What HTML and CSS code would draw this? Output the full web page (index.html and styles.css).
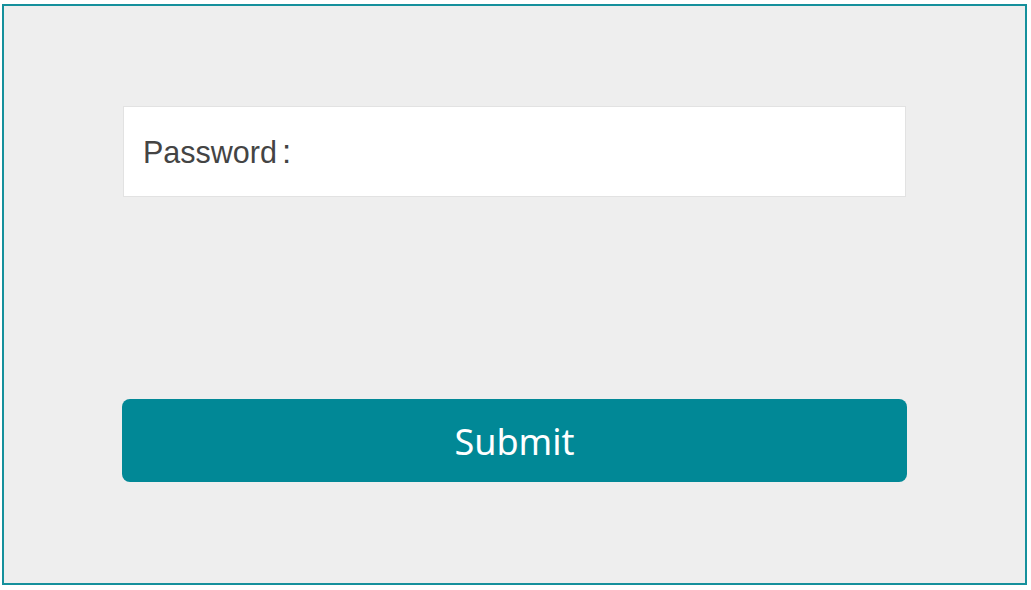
FILE: index.html
```html
<!DOCTYPE html>
<html>
<head>
<meta charset="utf-8">
<link rel="stylesheet" href="styles.css">
</head>
<body>
<div class="frame">
  <div class="field"><span class="label">Password<span class="colon">:</span></span></div>
  <button class="submit">Submit</button>
</div>
</body>
</html>
```
FILE: styles.css
```css
html, body { margin: 0; padding: 0; background: #ffffff; }
.frame {
  box-sizing: border-box;
  margin: 4px 0 0 2px;
  width: 1025px;
  height: 581px;
  border: 2px solid #15909c;
  background: #eeeeee;
  padding: 100px 0 0 118px;
  display: flex;
  flex-direction: column;
  align-items: flex-start;
}
.field {
  box-sizing: border-box;
  margin-left: 1px;
  width: 783px;
  height: 91px;
  background: #ffffff;
  border: 1px solid #e2e2e2;
  display: flex;
  align-items: center;
  padding-left: 19px;
}
.label {
  font-family: "Liberation Sans", Arial, sans-serif;
  font-size: 30.5px;
  color: #444444;
}
.colon {
  margin-left: 5px;
  font-size: 33px;
}
.submit {
  margin-top: 202px;
  width: 785px;
  height: 83px;
  border: none;
  border-radius: 8px;
  background: #018896;
  color: #ffffff;
  font-family: "Noto Sans", sans-serif;
  font-size: 36px;
  padding: 2px 0 0 0;
}
```
